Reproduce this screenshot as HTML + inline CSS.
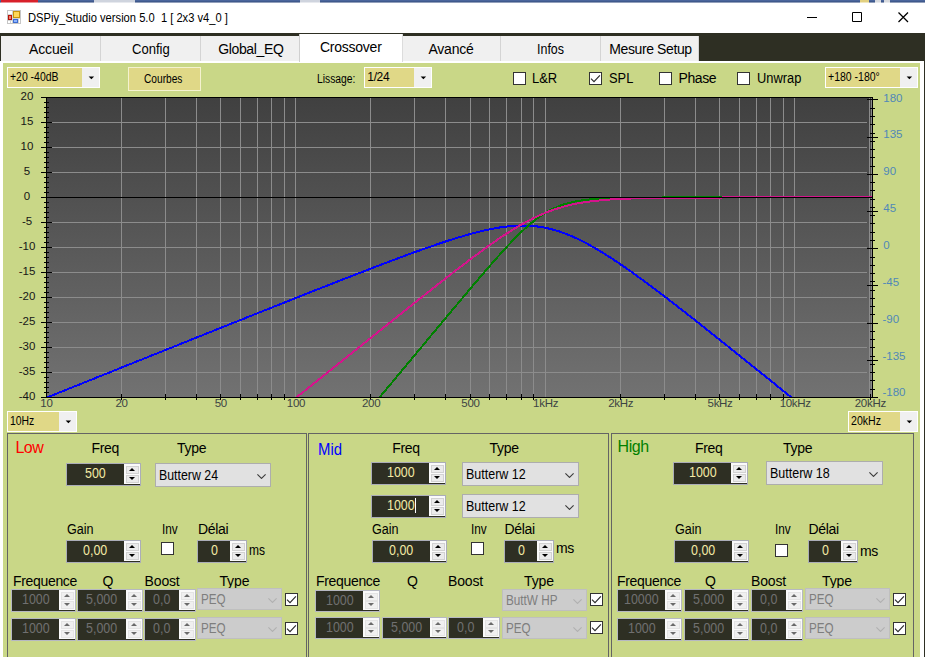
<!DOCTYPE html><html><head><meta charset="utf-8"><title>DSPiy_Studio</title><style>
*{box-sizing:border-box;margin:0;padding:0}
html,body{width:925px;height:657px;overflow:hidden;background:#fff;font-family:"Liberation Sans",sans-serif;font-size:13px;color:#000}
#root{position:relative;width:925px;height:657px;overflow:hidden;background:#fff}
#root>*{position:absolute}
.tx{white-space:pre;line-height:1}
.topstrip{left:0;top:0;width:925px;height:3px;background:linear-gradient(#4a659c 0,#4a659c 1px,#3f598c 1px,#3f598c 2px,#929fbb 2px,#929fbb 3px)}
.tabband{left:0;top:33px;width:925px;height:30px;background:#2e2f23}
.tab{top:36px;height:25px;background:#f0f0f0;border-right:1px solid #d4d4d4}
.tab.sel{top:34px;height:28px;background:#fff;border:none;border-right:1px solid #dcdcdc;border-left:1px solid #d0d0d0}
.page{left:0;top:61px;width:924px;height:600px;background:#c9d787;border:3px solid #fff;border-top-width:2px;border-right-width:4px}
.rightdark{left:924px;top:33px;width:1px;height:630px;background:#2e2f23}
.chart{left:0;top:0}
.cby{background:#e0d887;border:1px solid #fff}
.cby .btn{position:absolute;right:0;top:0;bottom:0;width:17px;background:#f0f0f0}
.cby .btn svg{position:absolute;left:6px;top:8px}
.btnc{background:#e0d887;border:1px solid #f4f2cf}
.chk{width:13px;height:13px;background:#fff;border:1px solid #333}
.chk svg{position:absolute;left:-1px;top:-1px}
.grp{border:1px solid #646464}
.num{background:#2e2f23;border:1px solid #abadb8}
.num .sp{position:absolute;right:0;top:0;bottom:1px;width:16px;background:#fafafa}
.num .sp .u,.num .sp .d{position:absolute;left:2px;width:12.5px;height:8px;border:1px solid #d2d2d2;background:#ebebeb}
.num .sp .u{top:1.5px} .num .sp .d{bottom:1.5px}
.num .sp i{position:absolute;left:50%;top:50%;width:0;height:0;margin-left:-3px;border-left:3px solid transparent;border-right:3px solid transparent}
.num .sp .u i{margin-top:-2px;border-bottom:3.5px solid #000}
.num .sp .d i{margin-top:-1.5px;border-top:3.5px solid #000}
.num.dis{border-color:#b6b8c2}
.num.dis .sp .u,.num.dis .sp .d{border-color:#e4e4e4;background:#f0f0f0;left:1.5px;width:13px}
.num.dis .sp .u i{border-bottom-color:#6a6a6a}
.num.dis .sp .d i{border-top-color:#6a6a6a}
.cb{background:#e1e1e1;border:1px solid #adadad}
.cb .chev{position:absolute;right:4px;top:50%;margin-top:-1.5px;stroke:#3a3a3a}
.cb.dis{background:#cccccc;border-color:#bfbfbf}
.cb.dis .chev{stroke:#b0b0b0}
</style></head><body><div id="root">
<div class="topstrip"></div>
<div style="left:1px;top:0;width:37px;height:3px;background:linear-gradient(#d8202a 0,#d8202a 2px,#eb9095 2px,#eb9095 3px)"></div>
<div style="left:94px;top:0;width:41px;height:3px;background:linear-gradient(#cfd4de 0,#cfd4de 2px,#e7e9ee 2px,#e7e9ee 3px)"></div>
<div style="left:300px;top:0;width:20px;height:3px;background:linear-gradient(#cfd4de 0,#cfd4de 2px,#e7e9ee 2px,#e7e9ee 3px)"></div>
<div style="left:860px;top:0;width:9px;height:3px;background:linear-gradient(#e2d080 0,#e2d080 2px,#f0e7bf 2px,#f0e7bf 3px)"></div>
<div style="left:875px;top:0;width:6px;height:3px;background:linear-gradient(#d8dade 0,#d8dade 2px,#ebecee 2px,#ebecee 3px)"></div>
<div style="left:884px;top:0;width:6px;height:3px;background:linear-gradient(#d8dade 0,#d8dade 2px,#ebecee 2px,#ebecee 3px)"></div>
<svg style="left:7px;top:10px" width="14" height="14" viewBox="0 0 14 14"><rect x="0.5" y="0.5" width="13" height="13" fill="#fff" stroke="#c6c6c6"/><path d="M5.5 1V13M1 4.5H5.5M5.5 8.5H13M1 10.5H5.5M3.5 10.5V13M11.5 8.5V13" stroke="#d2d2d2" fill="none"/><rect x="6" y="1" width="7" height="7" fill="#c8940c"/><rect x="7" y="2" width="5" height="5" fill="#ffd858"/><rect x="1" y="5" width="4" height="5" fill="#b81408"/><rect x="2" y="6" width="2" height="3" fill="#f08070"/><rect x="6" y="9" width="5" height="4" fill="#3c6cd0"/><rect x="7" y="10" width="3" height="2" fill="#8cb4ff"/></svg>
<div class="tx" style="font-size:12px;transform:scaleX(0.9309);transform-origin:0 0;left:27.80px;top:12.00px;">DSPiy_Studio version 5.0  1 [ 2x3 v4_0 ]</div>
<svg style="left:800px;top:3px" width="125" height="30" viewBox="0 0 125 30"><path d="M7 14.5H17 M52.5 9.5H61.5V18.5H52.5Z " stroke="#000" stroke-width="1" fill="none"/><path d="M98.5 9.5L108 19 M108 9.5L98.5 19" stroke="#000" stroke-width="1.25" fill="none"/></svg>
<div class="tabband"></div>
<div class="tab" style="left:1px;width:100px"></div>
<div class="tx" style="font-size:14px;letter-spacing:-0.133px;left:29.00px;top:42.00px;">Accueil</div>
<div class="tab" style="left:101px;width:100px"></div>
<div class="tx" style="font-size:14px;transform:scaleX(0.9317);transform-origin:0 0;left:132.30px;top:42.00px;">Config</div>
<div class="tab" style="left:201px;width:99px"></div>
<div class="tx" style="font-size:14px;letter-spacing:-0.353px;left:218.20px;top:42.00px;">Global_EQ</div>
<div class="tab" style="left:403px;width:98px"></div>
<div class="tx" style="font-size:14px;letter-spacing:-0.190px;left:428.40px;top:42.00px;">Avancé</div>
<div class="tab" style="left:501px;width:100px"></div>
<div class="tx" style="font-size:14px;transform:scaleX(0.8896);transform-origin:0 0;left:537.40px;top:42.00px;">Infos</div>
<div class="tab" style="left:601px;width:98px"></div>
<div class="tx" style="font-size:14px;letter-spacing:-0.397px;left:609.30px;top:42.00px;">Mesure Setup</div>
<div class="page"></div>
<div class="tab sel" style="left:299px;width:104px"></div>
<div class="tx" style="font-size:14px;letter-spacing:-0.233px;left:319.90px;top:40.00px;">Crossover</div>
<div class="rightdark"></div>
<svg class="chart" width="925" height="657" viewBox="0 0 925 657">
<defs><linearGradient id="pg" x1="0" y1="0" x2="0" y2="1"><stop offset="0" stop-color="#404040"/><stop offset="1" stop-color="#727272"/></linearGradient><clipPath id="pc"><rect x="47" y="98" width="825" height="299"/></clipPath></defs>
<rect x="46" y="97" width="827" height="301" fill="url(#pg)"/>
<path d="M121.5 98V397 M165.5 98V397 M196.5 98V397 M220.5 98V397 M240.5 98V397 M257.5 98V397 M271.5 98V397 M284.5 98V397 M295.5 98V397 M370.5 98V397 M414.5 98V397 M445.5 98V397 M470.5 98V397 M489.5 98V397 M506.5 98V397 M521.5 98V397 M533.5 98V397 M545.5 98V397 M620.5 98V397 M664.5 98V397 M695.5 98V397 M719.5 98V397 M739.5 98V397 M756.5 98V397 M770.5 98V397 M783.5 98V397 M794.5 98V397 M869.5 98V397 M871.5 98V397 M52 122.5H867 M52 147.5H867 M52 172.5H867 M52 222.5H867 M52 247.5H867 M52 272.5H867 M52 297.5H867 M52 322.5H867 M52 347.5H867 M52 372.5H867" stroke="#8c8c8c" stroke-width="1" fill="none" shape-rendering="crispEdges"/>
<path d="M46.6 397.6 L48.7 396.8 L50.7 395.9 L52.8 395.1 L54.9 394.3 L56.9 393.5 L59.0 392.6 L61.1 391.8 L63.1 391.0 L65.2 390.2 L67.3 389.3 L69.3 388.5 L71.4 387.7 L73.4 386.8 L75.5 386.0 L77.6 385.2 L79.6 384.4 L81.7 383.5 L83.8 382.7 L85.8 381.9 L87.9 381.1 L90.0 380.2 L92.0 379.4 L94.1 378.6 L96.2 377.7 L98.2 376.9 L100.3 376.1 L102.4 375.3 L104.4 374.4 L106.5 373.6 L108.6 372.8 L110.6 372.0 L112.7 371.1 L114.8 370.3 L116.8 369.5 L118.9 368.6 L120.9 367.8 L123.0 367.0 L125.1 366.2 L127.1 365.3 L129.2 364.5 L131.3 363.7 L133.3 362.9 L135.4 362.0 L137.5 361.2 L139.5 360.4 L141.6 359.6 L143.7 358.7 L145.7 357.9 L147.8 357.1 L149.9 356.2 L151.9 355.4 L154.0 354.6 L156.1 353.8 L158.1 352.9 L160.2 352.1 L162.3 351.3 L164.3 350.5 L166.4 349.6 L168.4 348.8 L170.5 348.0 L172.6 347.2 L174.6 346.3 L176.7 345.5 L178.8 344.7 L180.8 343.8 L182.9 343.0 L185.0 342.2 L187.0 341.4 L189.1 340.5 L191.2 339.7 L193.2 338.9 L195.3 338.1 L197.4 337.2 L199.4 336.4 L201.5 335.6 L203.6 334.8 L205.6 333.9 L207.7 333.1 L209.8 332.3 L211.8 331.5 L213.9 330.6 L215.9 329.8 L218.0 329.0 L220.1 328.2 L222.1 327.3 L224.2 326.5 L226.3 325.7 L228.3 324.9 L230.4 324.0 L232.5 323.2 L234.5 322.4 L236.6 321.6 L238.7 320.7 L240.7 319.9 L242.8 319.1 L244.9 318.3 L246.9 317.4 L249.0 316.6 L251.1 315.8 L253.1 315.0 L255.2 314.1 L257.3 313.3 L259.3 312.5 L261.4 311.7 L263.4 310.8 L265.5 310.0 L267.6 309.2 L269.6 308.4 L271.7 307.6 L273.8 306.7 L275.8 305.9 L277.9 305.1 L280.0 304.3 L282.0 303.4 L284.1 302.6 L286.2 301.8 L288.2 301.0 L290.3 300.2 L292.4 299.3 L294.4 298.5 L296.5 297.7 L298.6 296.9 L300.6 296.1 L302.7 295.2 L304.8 294.4 L306.8 293.6 L308.9 292.8 L310.9 292.0 L313.0 291.2 L315.1 290.3 L317.1 289.5 L319.2 288.7 L321.3 287.9 L323.3 287.1 L325.4 286.3 L327.5 285.5 L329.5 284.7 L331.6 283.8 L333.7 283.0 L335.7 282.2 L337.8 281.4 L339.9 280.6 L341.9 279.8 L344.0 279.0 L346.1 278.2 L348.1 277.4 L350.2 276.6 L352.3 275.8 L354.3 275.0 L356.4 274.2 L358.4 273.4 L360.5 272.6 L362.6 271.8 L364.6 271.0 L366.7 270.2 L368.8 269.4 L370.8 268.6 L372.9 267.8 L375.0 267.0 L377.0 266.2 L379.1 265.4 L381.2 264.6 L383.2 263.9 L385.3 263.1 L387.4 262.3 L389.4 261.5 L391.5 260.7 L393.6 260.0 L395.6 259.2 L397.7 258.4 L399.8 257.6 L401.8 256.9 L403.9 256.1 L405.9 255.4 L408.0 254.6 L410.1 253.8 L412.1 253.1 L414.2 252.3 L416.3 251.6 L418.3 250.9 L420.4 250.1 L422.5 249.4 L424.5 248.7 L426.6 247.9 L428.7 247.2 L430.7 246.5 L432.8 245.8 L434.9 245.1 L436.9 244.4 L439.0 243.7 L441.1 243.0 L443.1 242.3 L445.2 241.6 L447.3 240.9 L449.3 240.3 L451.4 239.6 L453.4 239.0 L455.5 238.3 L457.6 237.7 L459.6 237.1 L461.7 236.5 L463.8 235.9 L465.8 235.3 L467.9 234.7 L470.0 234.1 L472.0 233.5 L474.1 233.0 L476.2 232.5 L478.2 231.9 L480.3 231.4 L482.4 230.9 L484.4 230.5 L486.5 230.0 L488.6 229.6 L490.6 229.1 L492.7 228.7 L494.8 228.4 L496.8 228.0 L498.9 227.6 L500.9 227.3 L503.0 227.0 L505.1 226.8 L507.1 226.5 L509.2 226.3 L511.3 226.1 L513.3 225.9 L515.4 225.8 L517.5 225.7 L519.5 225.6 L521.6 225.6 L523.7 225.6 L525.7 225.6 L527.8 225.7 L529.9 225.8 L531.9 226.0 L534.0 226.1 L536.1 226.3 L538.1 226.6 L540.2 226.9 L542.3 227.2 L544.3 227.6 L546.4 228.0 L548.4 228.5 L550.5 229.0 L552.6 229.5 L554.6 230.1 L556.7 230.7 L558.8 231.3 L560.8 232.0 L562.9 232.7 L565.0 233.5 L567.0 234.3 L569.1 235.1 L571.2 236.0 L573.2 236.9 L575.3 237.8 L577.4 238.7 L579.4 239.7 L581.5 240.8 L583.6 241.8 L585.6 242.9 L587.7 244.0 L589.8 245.1 L591.8 246.3 L593.9 247.4 L595.9 248.6 L598.0 249.9 L600.1 251.1 L602.1 252.4 L604.2 253.6 L606.3 254.9 L608.3 256.3 L610.4 257.6 L612.5 258.9 L614.5 260.3 L616.6 261.7 L618.7 263.1 L620.7 264.5 L622.8 265.9 L624.9 267.3 L626.9 268.8 L629.0 270.2 L631.1 271.7 L633.1 273.1 L635.2 274.6 L637.2 276.1 L639.3 277.6 L641.4 279.1 L643.4 280.6 L645.5 282.2 L647.6 283.7 L649.6 285.2 L651.7 286.8 L653.8 288.3 L655.8 289.9 L657.9 291.4 L660.0 293.0 L662.0 294.6 L664.1 296.1 L666.2 297.7 L668.2 299.3 L670.3 300.9 L672.4 302.5 L674.4 304.1 L676.5 305.7 L678.6 307.3 L680.6 308.9 L682.7 310.5 L684.7 312.1 L686.8 313.8 L688.9 315.4 L690.9 317.0 L693.0 318.6 L695.1 320.2 L697.1 321.9 L699.2 323.5 L701.3 325.1 L703.3 326.8 L705.4 328.4 L707.5 330.1 L709.5 331.7 L711.6 333.4 L713.7 335.0 L715.7 336.6 L717.8 338.3 L719.9 339.9 L721.9 341.6 L724.0 343.2 L726.1 344.9 L728.1 346.5 L730.2 348.2 L732.2 349.9 L734.3 351.5 L736.4 353.2 L738.4 354.8 L740.5 356.5 L742.6 358.1 L744.6 359.8 L746.7 361.5 L748.8 363.1 L750.8 364.8 L752.9 366.4 L755.0 368.1 L757.0 369.8 L759.1 371.4 L761.2 373.1 L763.2 374.7 L765.3 376.4 L767.4 378.1 L769.4 379.7 L771.5 381.4 L773.6 383.0 L775.6 384.7 L777.7 386.4 L779.7 388.0 L781.8 389.7 L783.9 391.4 L785.9 393.0 L788.0 394.7 L790.1 396.3 L792.1 398.0 L794.2 399.7 L796.3 401.3 L798.3 403.0 L800.4 404.6 L802.5 406.3 L804.5 408.0 L806.6 409.6 L808.7 411.3 L810.7 412.9 L812.8 414.6 L814.9 416.3 L816.9 417.9 L819.0 419.6 L821.1 421.2 L823.1 422.9 L825.2 424.6 L827.2 426.2 L829.3 427.9 L831.4 429.5 L833.4 431.2 L835.5 432.9 L837.6 434.5 L839.6 436.2 L841.7 437.8 L843.8 439.5 L845.8 441.2 L847.9 442.8 L850.0 444.5 L852.0 446.1 L854.1 447.8 L856.2 449.4 L858.2 451.1 L860.3 452.8 L862.4 454.4 L864.4 456.1 L866.5 457.7 L868.6 459.4" stroke="#0000ff" stroke-width="2" fill="none" clip-path="url(#pc)" stroke-linejoin="round" shape-rendering="crispEdges"/>
<path d="M329.5 457.5 L331.6 455.1 L333.7 452.6 L335.7 450.1 L337.8 447.6 L339.9 445.1 L341.9 442.6 L344.0 440.2 L346.1 437.7 L348.1 435.2 L350.2 432.7 L352.3 430.2 L354.3 427.7 L356.4 425.3 L358.4 422.8 L360.5 420.3 L362.6 417.8 L364.6 415.3 L366.7 412.9 L368.8 410.4 L370.8 407.9 L372.9 405.4 L375.0 402.9 L377.0 400.4 L379.1 398.0 L381.2 395.5 L383.2 393.0 L385.3 390.5 L387.4 388.0 L389.4 385.6 L391.5 383.1 L393.6 380.6 L395.6 378.1 L397.7 375.6 L399.8 373.1 L401.8 370.7 L403.9 368.2 L405.9 365.7 L408.0 363.2 L410.1 360.7 L412.1 358.3 L414.2 355.8 L416.3 353.3 L418.3 350.8 L420.4 348.3 L422.5 345.9 L424.5 343.4 L426.6 340.9 L428.7 338.4 L430.7 335.9 L432.8 333.5 L434.9 331.0 L436.9 328.5 L439.0 326.0 L441.1 323.6 L443.1 321.1 L445.2 318.6 L447.3 316.1 L449.3 313.7 L451.4 311.2 L453.4 308.7 L455.5 306.3 L457.6 303.8 L459.6 301.3 L461.7 298.9 L463.8 296.4 L465.8 294.0 L467.9 291.5 L470.0 289.1 L472.0 286.6 L474.1 284.2 L476.2 281.8 L478.2 279.3 L480.3 276.9 L482.4 274.5 L484.4 272.1 L486.5 269.7 L488.6 267.3 L490.6 264.9 L492.7 262.6 L494.8 260.2 L496.8 257.9 L498.9 255.6 L500.9 253.3 L503.0 251.0 L505.1 248.7 L507.1 246.5 L509.2 244.3 L511.3 242.1 L513.3 239.9 L515.4 237.8 L517.5 235.8 L519.5 233.7 L521.6 231.7 L523.7 229.8 L525.7 227.9 L527.8 226.1 L529.9 224.3 L531.9 222.6 L534.0 220.9 L536.1 219.3 L538.1 217.8 L540.2 216.3 L542.3 214.9 L544.3 213.6 L546.4 212.3 L548.4 211.1 L550.5 210.0 L552.6 209.0 L554.6 208.0 L556.7 207.1 L558.8 206.2 L560.8 205.4 L562.9 204.7 L565.0 204.1 L567.0 203.4 L569.1 202.9 L571.2 202.4 L573.2 201.9 L575.3 201.5 L577.4 201.1 L579.4 200.7 L581.5 200.4 L583.6 200.1 L585.6 199.9 L587.7 199.6 L589.8 199.4 L591.8 199.2 L593.9 199.1 L595.9 198.9 L598.0 198.8 L600.1 198.7 L602.1 198.5 L604.2 198.4 L606.3 198.4 L608.3 198.3 L610.4 198.2 L612.5 198.1 L614.5 198.1 L616.6 198.0 L618.7 198.0 L620.7 197.9 L622.8 197.9 L624.9 197.9 L626.9 197.8 L629.0 197.8 L631.1 197.8 L633.1 197.8 L635.2 197.8 L637.2 197.7 L639.3 197.7 L641.4 197.7 L643.4 197.7 L645.5 197.7 L647.6 197.7 L649.6 197.7 L651.7 197.7 L653.8 197.7 L655.8 197.6 L657.9 197.6 L660.0 197.6 L662.0 197.6 L664.1 197.0 L666.2 197.0 L668.2 197.0 L670.3 197.0 L672.4 197.0 L674.4 197.0 L676.5 197.0 L678.6 197.0 L680.6 197.0 L682.7 197.0 L684.7 197.0 L686.8 197.0 L688.9 197.0 L690.9 197.0 L693.0 197.0 L695.1 197.0 L697.1 197.0 L699.2 197.0 L701.3 197.0 L703.3 197.0 L705.4 197.0 L707.5 197.0 L709.5 197.0 L711.6 197.0 L713.7 197.0 L715.7 197.0 L717.8 197.0 L719.9 197.0 L721.9 197.0 L724.0 197.0 L726.1 197.0 L728.1 197.0 L730.2 197.0 L732.2 197.0 L734.3 197.0 L736.4 197.0 L738.4 197.0 L740.5 197.0 L742.6 197.0 L744.6 197.0 L746.7 197.0 L748.8 197.0 L750.8 197.0 L752.9 197.0 L755.0 197.0 L757.0 197.0 L759.1 197.0 L761.2 197.0 L763.2 197.0 L765.3 197.0 L767.4 197.0 L769.4 197.0 L771.5 197.0 L773.6 197.0 L775.6 197.0 L777.7 197.0 L779.7 197.0 L781.8 197.0 L783.9 197.0 L785.9 197.0 L788.0 197.0 L790.1 197.0 L792.1 197.0 L794.2 197.0 L796.3 197.0 L798.3 197.0 L800.4 197.0 L802.5 197.0 L804.5 197.0 L806.6 197.0 L808.7 197.0 L810.7 197.0 L812.8 197.0 L814.9 197.0 L816.9 197.0 L819.0 197.0 L821.1 197.0 L823.1 197.0 L825.2 197.0 L827.2 197.0 L829.3 197.0 L831.4 197.0 L833.4 197.0 L835.5 197.0 L837.6 197.0 L839.6 197.0 L841.7 197.0 L843.8 197.0 L845.8 197.0 L847.9 197.0 L850.0 197.0 L852.0 197.0 L854.1 197.0 L856.2 197.0 L858.2 197.0 L860.3 197.0 L862.4 197.0 L864.4 197.0 L866.5 197.0 L868.6 197.0 L870.6 197.0 L872.7 197.0" stroke="#008000" stroke-width="2" fill="none" clip-path="url(#pc)" stroke-linejoin="round" shape-rendering="crispEdges"/>
<path d="M220.1 458.6 L222.1 456.9 L224.2 455.3 L226.3 453.6 L228.3 452.0 L230.4 450.3 L232.5 448.7 L234.5 447.0 L236.6 445.4 L238.7 443.7 L240.7 442.0 L242.8 440.4 L244.9 438.7 L246.9 437.1 L249.0 435.4 L251.1 433.8 L253.1 432.1 L255.2 430.5 L257.3 428.8 L259.3 427.2 L261.4 425.5 L263.4 423.8 L265.5 422.2 L267.6 420.5 L269.6 418.9 L271.7 417.2 L273.8 415.6 L275.8 413.9 L277.9 412.3 L280.0 410.6 L282.0 409.0 L284.1 407.3 L286.2 405.6 L288.2 404.0 L290.3 402.3 L292.4 400.7 L294.4 399.0 L296.5 397.4 L298.6 395.7 L300.6 394.1 L302.7 392.4 L304.8 390.8 L306.8 389.1 L308.9 387.4 L310.9 385.8 L313.0 384.1 L315.1 382.5 L317.1 380.8 L319.2 379.2 L321.3 377.5 L323.3 375.9 L325.4 374.2 L327.5 372.6 L329.5 370.9 L331.6 369.2 L333.7 367.6 L335.7 365.9 L337.8 364.3 L339.9 362.6 L341.9 361.0 L344.0 359.3 L346.1 357.7 L348.1 356.0 L350.2 354.4 L352.3 352.7 L354.3 351.1 L356.4 349.4 L358.4 347.7 L360.5 346.1 L362.6 344.4 L364.6 342.8 L366.7 341.1 L368.8 339.5 L370.8 337.8 L372.9 336.2 L375.0 334.5 L377.0 332.9 L379.1 331.2 L381.2 329.6 L383.2 327.9 L385.3 326.3 L387.4 324.6 L389.4 323.0 L391.5 321.3 L393.6 319.7 L395.6 318.0 L397.7 316.4 L399.8 314.7 L401.8 313.1 L403.9 311.4 L405.9 309.8 L408.0 308.1 L410.1 306.5 L412.1 304.9 L414.2 303.2 L416.3 301.6 L418.3 299.9 L420.4 298.3 L422.5 296.7 L424.5 295.0 L426.6 293.4 L428.7 291.7 L430.7 290.1 L432.8 288.5 L434.9 286.9 L436.9 285.2 L439.0 283.6 L441.1 282.0 L443.1 280.4 L445.2 278.7 L447.3 277.1 L449.3 275.5 L451.4 273.9 L453.4 272.3 L455.5 270.7 L457.6 269.1 L459.6 267.5 L461.7 265.9 L463.8 264.4 L465.8 262.8 L467.9 261.2 L470.0 259.6 L472.0 258.1 L474.1 256.5 L476.2 255.0 L478.2 253.5 L480.3 251.9 L482.4 250.4 L484.4 248.9 L486.5 247.4 L488.6 245.9 L490.6 244.5 L492.7 243.0 L494.8 241.6 L496.8 240.1 L498.9 238.7 L500.9 237.3 L503.0 236.0 L505.1 234.6 L507.1 233.2 L509.2 231.9 L511.3 230.6 L513.3 229.3 L515.4 228.1 L517.5 226.8 L519.5 225.6 L521.6 224.4 L523.7 223.3 L525.7 222.1 L527.8 221.0 L529.9 220.0 L531.9 218.9 L534.0 217.9 L536.1 216.9 L538.1 215.9 L540.2 215.0 L542.3 214.1 L544.3 213.3 L546.4 212.4 L548.4 211.6 L550.5 210.8 L552.6 210.1 L554.6 209.4 L556.7 208.7 L558.8 208.1 L560.8 207.5 L562.9 206.9 L565.0 206.3 L567.0 205.8 L569.1 205.3 L571.2 204.8 L573.2 204.3 L575.3 203.9 L577.4 203.5 L579.4 203.1 L581.5 202.8 L583.6 202.4 L585.6 202.1 L587.7 201.8 L589.8 201.5 L591.8 201.3 L593.9 201.0 L595.9 200.8 L598.0 200.6 L600.1 200.3 L602.1 200.2 L604.2 200.0 L606.3 199.8 L608.3 199.7 L610.4 199.5 L612.5 199.4 L614.5 199.3 L616.6 199.1 L618.7 199.0 L620.7 198.9 L622.8 198.8 L624.9 198.7 L626.9 198.7 L629.0 198.6 L631.1 198.5 L633.1 198.4 L635.2 198.4 L637.2 198.3 L639.3 198.3 L641.4 198.2 L643.4 198.2 L645.5 198.1 L647.6 198.1 L649.6 198.1 L651.7 198.0 L653.8 198.0 L655.8 198.0 L657.9 197.9 L660.0 197.9 L662.0 197.9 L664.1 197.9 L666.2 197.9 L668.2 197.8 L670.3 197.8 L672.4 197.8 L674.4 197.8 L676.5 197.8 L678.6 197.8 L680.6 197.7 L682.7 197.7 L684.7 197.7 L686.8 197.7 L688.9 197.7 L690.9 197.7 L693.0 197.7 L695.1 197.7 L697.1 197.7 L699.2 197.7 L701.3 197.7 L703.3 197.7 L705.4 197.7 L707.5 197.7 L709.5 197.7 L711.6 197.6 L713.7 197.6 L715.7 197.6 L717.8 197.6 L719.9 197.6 L721.9 197.6 L724.0 197.0 L726.1 197.0 L728.1 197.0 L730.2 197.0 L732.2 197.0 L734.3 197.0 L736.4 197.0 L738.4 197.0 L740.5 197.0 L742.6 197.0 L744.6 197.0 L746.7 197.0 L748.8 197.0 L750.8 197.0 L752.9 197.0 L755.0 197.0 L757.0 197.0 L759.1 197.0 L761.2 197.0 L763.2 197.0 L765.3 197.0 L767.4 197.0 L769.4 197.0 L771.5 197.0 L773.6 197.0 L775.6 197.0 L777.7 197.0 L779.7 197.0 L781.8 197.0 L783.9 197.0 L785.9 197.0 L788.0 197.0 L790.1 197.0 L792.1 197.0 L794.2 197.0 L796.3 197.0 L798.3 197.0 L800.4 197.0 L802.5 197.0 L804.5 197.0 L806.6 197.0 L808.7 197.0 L810.7 197.0 L812.8 197.0 L814.9 197.0 L816.9 197.0 L819.0 197.0 L821.1 197.0 L823.1 197.0 L825.2 197.0 L827.2 197.0 L829.3 197.0 L831.4 197.0 L833.4 197.0 L835.5 197.0 L837.6 197.0 L839.6 197.0 L841.7 197.0 L843.8 197.0 L845.8 197.0 L847.9 197.0 L850.0 197.0 L852.0 197.0 L854.1 197.0 L856.2 197.0 L858.2 197.0 L860.3 197.0 L862.4 197.0 L864.4 197.0 L866.5 197.0 L868.6 197.0 L870.6 197.0 L872.7 197.0" stroke="#d4148c" stroke-width="2" fill="none" clip-path="url(#pc)" stroke-linejoin="round" shape-rendering="crispEdges"/>
<path d="M47 197.5H872" stroke="#000" stroke-width="1" shape-rendering="crispEdges"/>
<path d="M41 97.5H873 M46.5 97V398 M41 397.5H878 M872.5 97V398 M41 97.5H52 M44 102.5H49 M44 107.5H49 M44 112.5H49 M44 117.5H49 M41 122.5H52 M44 127.5H49 M44 132.5H49 M44 137.5H49 M44 142.5H49 M41 147.5H52 M44 152.5H49 M44 157.5H49 M44 162.5H49 M44 167.5H49 M41 172.5H52 M44 177.5H49 M44 182.5H49 M44 187.5H49 M44 192.5H49 M41 197.5H52 M44 202.5H49 M44 207.5H49 M44 212.5H49 M44 217.5H49 M41 222.5H52 M44 227.5H49 M44 232.5H49 M44 237.5H49 M44 242.5H49 M41 247.5H52 M44 252.5H49 M44 257.5H49 M44 262.5H49 M44 267.5H49 M41 272.5H52 M44 277.5H49 M44 282.5H49 M44 287.5H49 M44 292.5H49 M41 297.5H52 M44 302.5H49 M44 307.5H49 M44 312.5H49 M44 317.5H49 M41 322.5H52 M44 327.5H49 M44 332.5H49 M44 337.5H49 M44 342.5H49 M41 347.5H52 M44 352.5H49 M44 357.5H49 M44 362.5H49 M44 367.5H49 M41 372.5H52 M44 377.5H49 M44 382.5H49 M44 387.5H49 M44 392.5H49 M41 397.5H52 M867 397.5H878 M870 389.5H875 M870 380.5H875 M870 372.5H875 M870 364.5H875 M867 360.5H878 M870 356.5H875 M870 347.5H875 M870 339.5H875 M870 331.5H875 M867 323.5H878 M870 314.5H875 M870 306.5H875 M870 298.5H875 M870 290.5H875 M867 285.5H878 M870 281.5H875 M870 273.5H875 M870 265.5H875 M870 257.5H875 M867 248.5H878 M870 240.5H875 M870 232.5H875 M870 223.5H875 M870 215.5H875 M867 211.5H878 M870 207.5H875 M870 199.5H875 M870 190.5H875 M870 182.5H875 M867 174.5H878 M870 166.5H875 M870 157.5H875 M870 149.5H875 M870 141.5H875 M867 137.5H878 M870 133.5H875 M870 124.5H875 M870 116.5H875 M870 108.5H875 M867 99.5H878 M121.5 394V400 M165.5 394V400 M196.5 394V400 M220.5 394V400 M240.5 394V400 M257.5 394V400 M271.5 394V400 M284.5 394V400 M370.5 394V400 M414.5 394V400 M445.5 394V400 M470.5 394V400 M489.5 394V400 M506.5 394V400 M521.5 394V400 M533.5 394V400 M620.5 394V400 M664.5 394V400 M695.5 394V400 M719.5 394V400 M739.5 394V400 M756.5 394V400 M770.5 394V400 M783.5 394V400 M870.5 394V400" stroke="#000" stroke-width="1" fill="none" shape-rendering="crispEdges"/>
</svg>
<div class="tx" style="font-size:11.5px;color:#161616;left:20.61px;top:91.00px;">20</div>
<div class="tx" style="font-size:11.5px;color:#161616;left:20.61px;top:116.00px;">15</div>
<div class="tx" style="font-size:11.5px;color:#161616;left:20.61px;top:141.00px;">10</div>
<div class="tx" style="font-size:11.5px;color:#161616;left:23.80px;top:166.00px;">5</div>
<div class="tx" style="font-size:11.5px;color:#161616;left:23.80px;top:191.00px;">0</div>
<div class="tx" style="font-size:11.5px;color:#161616;left:21.89px;top:216.00px;">-5</div>
<div class="tx" style="font-size:11.5px;color:#161616;left:18.69px;top:241.00px;">-10</div>
<div class="tx" style="font-size:11.5px;color:#161616;left:18.69px;top:266.00px;">-15</div>
<div class="tx" style="font-size:11.5px;color:#161616;left:18.69px;top:291.00px;">-20</div>
<div class="tx" style="font-size:11.5px;color:#161616;left:18.69px;top:316.00px;">-25</div>
<div class="tx" style="font-size:11.5px;color:#161616;left:18.69px;top:341.00px;">-30</div>
<div class="tx" style="font-size:11.5px;color:#161616;left:18.69px;top:366.00px;">-35</div>
<div class="tx" style="font-size:11.5px;color:#161616;left:18.69px;top:391.00px;">-40</div>
<div class="tx" style="font-size:11.5px;color:#5088b8;left:883.30px;top:93.00px;">180</div>
<div class="tx" style="font-size:11.5px;color:#5088b8;left:883.30px;top:129.00px;">135</div>
<div class="tx" style="font-size:11.5px;color:#5088b8;left:883.30px;top:166.00px;">90</div>
<div class="tx" style="font-size:11.5px;color:#5088b8;left:883.30px;top:203.00px;">45</div>
<div class="tx" style="font-size:11.5px;color:#5088b8;left:883.30px;top:240.00px;">0</div>
<div class="tx" style="font-size:11.5px;color:#5088b8;left:882.50px;top:277.00px;">-45</div>
<div class="tx" style="font-size:11.5px;color:#5088b8;left:882.50px;top:314.00px;">-90</div>
<div class="tx" style="font-size:11.5px;color:#5088b8;left:882.50px;top:351.00px;">-135</div>
<div class="tx" style="font-size:11.5px;color:#5088b8;left:882.50px;top:387.00px;">-180</div>
<div class="tx" style="font-size:11.5px;color:#3c4444;letter-spacing:-0.288px;left:40.29px;top:398.00px;">10</div>
<div class="tx" style="font-size:11.5px;color:#3c4444;letter-spacing:-0.288px;left:115.43px;top:398.00px;">20</div>
<div class="tx" style="font-size:11.5px;color:#3c4444;letter-spacing:-0.288px;left:214.76px;top:398.00px;">50</div>
<div class="tx" style="font-size:11.5px;color:#3c4444;letter-spacing:-0.288px;left:286.84px;top:398.00px;">100</div>
<div class="tx" style="font-size:11.5px;color:#3c4444;letter-spacing:-0.288px;left:361.98px;top:398.00px;">200</div>
<div class="tx" style="font-size:11.5px;color:#3c4444;letter-spacing:-0.288px;left:461.30px;top:398.00px;">500</div>
<div class="tx" style="font-size:11.5px;color:#3c4444;letter-spacing:-0.295px;left:533.09px;top:398.00px;">1kHz</div>
<div class="tx" style="font-size:11.5px;color:#3c4444;letter-spacing:-0.295px;left:608.23px;top:398.00px;">2kHz</div>
<div class="tx" style="font-size:11.5px;color:#3c4444;letter-spacing:-0.295px;left:707.55px;top:398.00px;">5kHz</div>
<div class="tx" style="font-size:11.5px;color:#3c4444;letter-spacing:-0.293px;left:779.64px;top:398.00px;">10kHz</div>
<div class="tx" style="font-size:11.5px;color:#3c4444;letter-spacing:-0.293px;left:854.77px;top:398.00px;">20kHz</div>
<div class="cby" style="left:7px;top:67px;width:93px;height:21px"><span class="btn"><svg width="7" height="4" viewBox="0 0 7 4"><path d="M0.6 0.4H6.1L3.35 3.3Z" fill="#000"/></svg></span></div>
<div class="tx" style="font-size:12px;transform:scaleX(0.8704);transform-origin:0 0;left:10.30px;top:71.00px;">+20 -40dB</div>
<div class="btnc" style="left:128px;top:67px;width:73px;height:24px"></div>
<div class="tx" style="font-size:12px;transform:scaleX(0.8464);transform-origin:0 0;left:143.70px;top:73.00px;">Courbes</div>
<div class="tx" style="font-size:12px;transform:scaleX(0.8589);transform-origin:0 0;left:317.30px;top:73.00px;">Lissage:</div>
<div class="cby" style="left:364px;top:67px;width:68px;height:21px"><span class="btn"><svg width="7" height="4" viewBox="0 0 7 4"><path d="M0.6 0.4H6.1L3.35 3.3Z" fill="#000"/></svg></span></div>
<div class="tx" style="font-size:12px;letter-spacing:-0.341px;left:367.30px;top:71.00px;">1/24</div>
<div class="chk" style="left:513px;top:72px"></div>
<div class="tx" style="font-size:14px;transform:scaleX(0.9253);transform-origin:0 0;left:532.40px;top:71.00px;">L&amp;R</div>
<div class="chk" style="left:589px;top:72px"><svg width="13" height="13" viewBox="0 0 13 13"><path d="M2 6.6L5 9.6L10.9 3.4" stroke="#2a2a2a" stroke-width="1.15" fill="none"/></svg></div>
<div class="tx" style="font-size:14px;transform:scaleX(0.9182);transform-origin:0 0;left:608.50px;top:71.00px;">SPL</div>
<div class="chk" style="left:659px;top:72px"></div>
<div class="tx" style="font-size:14px;letter-spacing:-0.419px;left:678.50px;top:71.00px;">Phase</div>
<div class="chk" style="left:737px;top:72px"></div>
<div class="tx" style="font-size:14px;transform:scaleX(0.9184);transform-origin:0 0;left:756.70px;top:71.00px;">Unwrap</div>
<div class="cby" style="left:825px;top:67px;width:93px;height:21px"><span class="btn"><svg width="7" height="4" viewBox="0 0 7 4"><path d="M0.6 0.4H6.1L3.35 3.3Z" fill="#000"/></svg></span></div>
<div class="tx" style="font-size:12px;transform:scaleX(0.8751);transform-origin:0 0;left:828.30px;top:71.00px;">+180 -180°</div>
<div class="cby" style="left:7px;top:411px;width:70px;height:21px"><span class="btn"><svg width="7" height="4" viewBox="0 0 7 4"><path d="M0.6 0.4H6.1L3.35 3.3Z" fill="#000"/></svg></span></div>
<div class="tx" style="font-size:12px;transform:scaleX(0.8673);transform-origin:0 0;left:10.30px;top:415.00px;">10Hz</div>
<div class="cby" style="left:848px;top:411px;width:70px;height:21px"><span class="btn"><svg width="7" height="4" viewBox="0 0 7 4"><path d="M0.6 0.4H6.1L3.35 3.3Z" fill="#000"/></svg></span></div>
<div class="tx" style="font-size:12px;transform:scaleX(0.8818);transform-origin:0 0;left:851.30px;top:415.00px;">20kHz</div>
<div class="grp" style="left:7px;top:433px;width:300px;height:240px"></div>
<div class="tx" style="font-size:16px;color:#ff0000;letter-spacing:-0.451px;left:15.40px;top:440.00px;">Low</div>
<div class="tx" style="font-size:14px;letter-spacing:-0.371px;left:91.60px;top:441.00px;">Freq</div>
<div class="tx" style="font-size:14px;letter-spacing:-0.262px;left:176.90px;top:441.00px;">Type</div>
<div class="num" style="left:66px;top:463px;width:75px;height:23px"><span class="sp"><span class="u"><i></i></span><span class="d"><i></i></span></span></div>
<div class="tx" style="font-size:14px;color:#f3eaa5;transform:scaleX(0.8901);transform-origin:0 0;left:85.11px;top:466.00px;">500</div>
<div class="cb" style="left:155px;top:463px;width:116px;height:24px"><svg class="chev" width="9" height="5" viewBox="0 0 9 5"><path d="M0.4 0.4L4.5 4.4L8.6 0.4" fill="none" stroke-width="1.1"/></svg></div>
<div class="tx" style="font-size:14px;color:#000;transform:scaleX(0.8816);transform-origin:0 0;left:159.30px;top:468.00px;">Butterw 24</div>
<div class="tx" style="font-size:14px;transform:scaleX(0.8996);transform-origin:0 0;left:66.70px;top:522.00px;">Gain</div>
<div class="tx" style="font-size:14px;transform:scaleX(0.8407);transform-origin:0 0;left:161.50px;top:522.00px;">Inv</div>
<div class="tx" style="font-size:14px;letter-spacing:-0.300px;left:198.00px;top:522.00px;">Délai</div>
<div class="num" style="left:66px;top:540px;width:75px;height:23px"><span class="sp"><span class="u"><i></i></span><span class="d"><i></i></span></span></div>
<div class="tx" style="font-size:14px;color:#f3eaa5;transform:scaleX(0.8901);transform-origin:0 0;left:83.37px;top:543.00px;">0,00</div>
<div class="chk" style="left:161px;top:542px"></div>
<div class="num" style="left:197px;top:540px;width:50px;height:23px"><span class="sp"><span class="u"><i></i></span><span class="d"><i></i></span></span></div>
<div class="tx" style="font-size:14px;color:#f3eaa5;transform:scaleX(0.8901);transform-origin:0 0;left:210.54px;top:543.00px;">0</div>
<div class="tx" style="font-size:14px;transform:scaleX(0.8573);transform-origin:0 0;left:249.00px;top:543.00px;">ms</div>
<div class="tx" style="font-size:14px;letter-spacing:-0.325px;left:13.00px;top:574.00px;">Frequence</div>
<div class="tx" style="font-size:14px;letter-spacing:-0.262px;left:102.40px;top:574.00px;">Q</div>
<div class="tx" style="font-size:14px;letter-spacing:-0.160px;left:144.60px;top:574.00px;">Boost</div>
<div class="tx" style="font-size:14px;letter-spacing:-0.087px;left:219.40px;top:574.00px;">Type</div>
<div class="num dis" style="left:11px;top:589px;width:65px;height:23px"><span class="sp"><span class="u"><i></i></span><span class="d"><i></i></span></span></div>
<div class="tx" style="font-size:14px;color:#707070;transform:scaleX(0.8901);transform-origin:0 0;left:21.64px;top:592.00px;">1000</div>
<div class="num dis" style="left:77px;top:589px;width:66px;height:23px"><span class="sp"><span class="u"><i></i></span><span class="d"><i></i></span></span></div>
<div class="tx" style="font-size:14px;color:#707070;transform:scaleX(0.8901);transform-origin:0 0;left:86.41px;top:592.00px;">5,000</div>
<div class="num dis" style="left:144px;top:589px;width:52px;height:23px"><span class="sp"><span class="u"><i></i></span><span class="d"><i></i></span></span></div>
<div class="tx" style="font-size:14px;color:#707070;transform:scaleX(0.8900);transform-origin:0 0;left:153.34px;top:592.00px;">0,0</div>
<div class="cb dis" style="left:197px;top:588px;width:85px;height:22px"><svg class="chev" width="9" height="5" viewBox="0 0 9 5"><path d="M0.4 0.4L4.5 4.4L8.6 0.4" fill="none" stroke-width="1.1"/></svg></div>
<div class="tx" style="font-size:14px;color:#7e7e7e;transform:scaleX(0.8319);transform-origin:0 0;left:201.30px;top:592.00px;">PEQ</div>
<div class="chk" style="left:285px;top:593px"><svg width="13" height="13" viewBox="0 0 13 13"><path d="M2 6.6L5 9.6L10.9 3.4" stroke="#2a2a2a" stroke-width="1.15" fill="none"/></svg></div>
<div class="num dis" style="left:11px;top:618px;width:65px;height:23px"><span class="sp"><span class="u"><i></i></span><span class="d"><i></i></span></span></div>
<div class="tx" style="font-size:14px;color:#707070;transform:scaleX(0.8901);transform-origin:0 0;left:21.64px;top:621.00px;">1000</div>
<div class="num dis" style="left:77px;top:618px;width:66px;height:23px"><span class="sp"><span class="u"><i></i></span><span class="d"><i></i></span></span></div>
<div class="tx" style="font-size:14px;color:#707070;transform:scaleX(0.8901);transform-origin:0 0;left:86.41px;top:621.00px;">5,000</div>
<div class="num dis" style="left:144px;top:618px;width:52px;height:23px"><span class="sp"><span class="u"><i></i></span><span class="d"><i></i></span></span></div>
<div class="tx" style="font-size:14px;color:#707070;transform:scaleX(0.8900);transform-origin:0 0;left:153.34px;top:621.00px;">0,0</div>
<div class="cb dis" style="left:197px;top:617px;width:85px;height:22px"><svg class="chev" width="9" height="5" viewBox="0 0 9 5"><path d="M0.4 0.4L4.5 4.4L8.6 0.4" fill="none" stroke-width="1.1"/></svg></div>
<div class="tx" style="font-size:14px;color:#7e7e7e;transform:scaleX(0.8319);transform-origin:0 0;left:201.30px;top:621.00px;">PEQ</div>
<div class="chk" style="left:285px;top:622px"><svg width="13" height="13" viewBox="0 0 13 13"><path d="M2 6.6L5 9.6L10.9 3.4" stroke="#2a2a2a" stroke-width="1.15" fill="none"/></svg></div>
<div class="grp" style="left:308px;top:433px;width:301px;height:240px"></div>
<div class="tx" style="font-size:16px;color:#0000ff;transform:scaleX(0.9309);transform-origin:0 0;left:317.70px;top:442.00px;">Mid</div>
<div class="tx" style="font-size:14px;letter-spacing:-0.371px;left:392.30px;top:441.00px;">Freq</div>
<div class="tx" style="font-size:14px;letter-spacing:-0.262px;left:489.60px;top:441.00px;">Type</div>
<div class="num" style="left:371px;top:462px;width:75px;height:23px"><span class="sp"><span class="u"><i></i></span><span class="d"><i></i></span></span></div>
<div class="tx" style="font-size:14px;color:#f3eaa5;transform:scaleX(0.8901);transform-origin:0 0;left:386.64px;top:465.00px;">1000</div>
<div class="cb" style="left:462px;top:462px;width:117px;height:24px"><svg class="chev" width="9" height="5" viewBox="0 0 9 5"><path d="M0.4 0.4L4.5 4.4L8.6 0.4" fill="none" stroke-width="1.1"/></svg></div>
<div class="tx" style="font-size:14px;color:#000;transform:scaleX(0.8920);transform-origin:0 0;left:466.30px;top:467.00px;">Butterw 12</div>
<div class="num" style="left:371px;top:495px;width:75px;height:23px"><span class="sp"><span class="u"><i></i></span><span class="d"><i></i></span></span></div>
<div class="tx" style="font-size:14px;color:#f3eaa5;transform:scaleX(0.8901);transform-origin:0 0;left:386.64px;top:498.00px;">1000</div>
<div style="left:415px;top:498px;width:1px;height:15px;background:#fff"></div>
<div class="cb" style="left:462px;top:494px;width:117px;height:24px"><svg class="chev" width="9" height="5" viewBox="0 0 9 5"><path d="M0.4 0.4L4.5 4.4L8.6 0.4" fill="none" stroke-width="1.1"/></svg></div>
<div class="tx" style="font-size:14px;color:#000;transform:scaleX(0.8920);transform-origin:0 0;left:466.30px;top:499.00px;">Butterw 12</div>
<div class="tx" style="font-size:14px;transform:scaleX(0.8996);transform-origin:0 0;left:372.30px;top:522.00px;">Gain</div>
<div class="tx" style="font-size:14px;transform:scaleX(0.8407);transform-origin:0 0;left:471.30px;top:522.00px;">Inv</div>
<div class="tx" style="font-size:14px;letter-spacing:-0.300px;left:504.50px;top:522.00px;">Délai</div>
<div class="num" style="left:372px;top:540px;width:75px;height:23px"><span class="sp"><span class="u"><i></i></span><span class="d"><i></i></span></span></div>
<div class="tx" style="font-size:14px;color:#f3eaa5;transform:scaleX(0.8901);transform-origin:0 0;left:389.37px;top:543.00px;">0,00</div>
<div class="chk" style="left:471px;top:542px"></div>
<div class="num" style="left:504px;top:540px;width:50px;height:23px"><span class="sp"><span class="u"><i></i></span><span class="d"><i></i></span></span></div>
<div class="tx" style="font-size:14px;color:#f3eaa5;transform:scaleX(0.8901);transform-origin:0 0;left:517.54px;top:543.00px;">0</div>
<div class="tx" style="font-size:14px;letter-spacing:-0.447px;left:556.00px;top:541.00px;">ms</div>
<div class="tx" style="font-size:14px;letter-spacing:-0.325px;left:316.00px;top:574.00px;">Frequence</div>
<div class="tx" style="font-size:14px;letter-spacing:-0.262px;left:407.00px;top:574.00px;">Q</div>
<div class="tx" style="font-size:14px;letter-spacing:-0.160px;left:448.00px;top:574.00px;">Boost</div>
<div class="tx" style="font-size:14px;letter-spacing:-0.087px;left:524.00px;top:574.00px;">Type</div>
<div class="num dis" style="left:315px;top:590px;width:65px;height:22px"><span class="sp"><span class="u"><i></i></span><span class="d"><i></i></span></span></div>
<div class="tx" style="font-size:14px;color:#707070;transform:scaleX(0.8901);transform-origin:0 0;left:325.64px;top:593.00px;">1000</div>
<div class="cb dis" style="left:502px;top:589px;width:85px;height:22px"><svg class="chev" width="9" height="5" viewBox="0 0 9 5"><path d="M0.4 0.4L4.5 4.4L8.6 0.4" fill="none" stroke-width="1.1"/></svg></div>
<div class="tx" style="font-size:14px;color:#7e7e7e;transform:scaleX(0.8379);transform-origin:0 0;left:506.30px;top:593.00px;">ButtW HP</div>
<div class="chk" style="left:590px;top:593px"><svg width="13" height="13" viewBox="0 0 13 13"><path d="M2 6.6L5 9.6L10.9 3.4" stroke="#2a2a2a" stroke-width="1.15" fill="none"/></svg></div>
<div class="num dis" style="left:315px;top:617px;width:65px;height:22px"><span class="sp"><span class="u"><i></i></span><span class="d"><i></i></span></span></div>
<div class="tx" style="font-size:14px;color:#707070;transform:scaleX(0.8901);transform-origin:0 0;left:325.64px;top:620.00px;">1000</div>
<div class="num dis" style="left:382px;top:617px;width:65px;height:22px"><span class="sp"><span class="u"><i></i></span><span class="d"><i></i></span></span></div>
<div class="tx" style="font-size:14px;color:#707070;transform:scaleX(0.8901);transform-origin:0 0;left:390.91px;top:620.00px;">5,000</div>
<div class="num dis" style="left:448px;top:617px;width:52px;height:22px"><span class="sp"><span class="u"><i></i></span><span class="d"><i></i></span></span></div>
<div class="tx" style="font-size:14px;color:#707070;transform:scaleX(0.8900);transform-origin:0 0;left:457.34px;top:620.00px;">0,0</div>
<div class="cb dis" style="left:502px;top:617px;width:85px;height:22px"><svg class="chev" width="9" height="5" viewBox="0 0 9 5"><path d="M0.4 0.4L4.5 4.4L8.6 0.4" fill="none" stroke-width="1.1"/></svg></div>
<div class="tx" style="font-size:14px;color:#7e7e7e;transform:scaleX(0.8319);transform-origin:0 0;left:506.30px;top:621.00px;">PEQ</div>
<div class="chk" style="left:590px;top:621px"><svg width="13" height="13" viewBox="0 0 13 13"><path d="M2 6.6L5 9.6L10.9 3.4" stroke="#2a2a2a" stroke-width="1.15" fill="none"/></svg></div>
<div class="grp" style="left:611px;top:433px;width:303px;height:240px"></div>
<div class="tx" style="font-size:16px;color:#008000;letter-spacing:-0.477px;left:617.60px;top:439.00px;">High</div>
<div class="tx" style="font-size:14px;letter-spacing:-0.371px;left:695.00px;top:441.00px;">Freq</div>
<div class="tx" style="font-size:14px;letter-spacing:-0.262px;left:783.00px;top:441.00px;">Type</div>
<div class="num" style="left:673px;top:462px;width:75px;height:23px"><span class="sp"><span class="u"><i></i></span><span class="d"><i></i></span></span></div>
<div class="tx" style="font-size:14px;color:#f3eaa5;transform:scaleX(0.8901);transform-origin:0 0;left:688.64px;top:465.00px;">1000</div>
<div class="cb" style="left:766px;top:461px;width:117px;height:24px"><svg class="chev" width="9" height="5" viewBox="0 0 9 5"><path d="M0.4 0.4L4.5 4.4L8.6 0.4" fill="none" stroke-width="1.1"/></svg></div>
<div class="tx" style="font-size:14px;color:#000;transform:scaleX(0.8920);transform-origin:0 0;left:770.30px;top:466.00px;">Butterw 18</div>
<div class="tx" style="font-size:14px;transform:scaleX(0.8996);transform-origin:0 0;left:675.30px;top:522.00px;">Gain</div>
<div class="tx" style="font-size:14px;transform:scaleX(0.8407);transform-origin:0 0;left:775.30px;top:522.00px;">Inv</div>
<div class="tx" style="font-size:14px;letter-spacing:-0.300px;left:808.50px;top:522.00px;">Délai</div>
<div class="num" style="left:674px;top:540px;width:75px;height:23px"><span class="sp"><span class="u"><i></i></span><span class="d"><i></i></span></span></div>
<div class="tx" style="font-size:14px;color:#f3eaa5;transform:scaleX(0.8901);transform-origin:0 0;left:691.37px;top:543.00px;">0,00</div>
<div class="chk" style="left:775px;top:544px"></div>
<div class="num" style="left:808px;top:540px;width:50px;height:23px"><span class="sp"><span class="u"><i></i></span><span class="d"><i></i></span></span></div>
<div class="tx" style="font-size:14px;color:#f3eaa5;transform:scaleX(0.8901);transform-origin:0 0;left:821.54px;top:543.00px;">0</div>
<div class="tx" style="font-size:14px;letter-spacing:-0.447px;left:860.00px;top:544.00px;">ms</div>
<div class="tx" style="font-size:14px;letter-spacing:-0.325px;left:617.00px;top:574.00px;">Frequence</div>
<div class="tx" style="font-size:14px;letter-spacing:-0.262px;left:705.00px;top:574.00px;">Q</div>
<div class="tx" style="font-size:14px;letter-spacing:-0.160px;left:751.00px;top:574.00px;">Boost</div>
<div class="tx" style="font-size:14px;letter-spacing:-0.087px;left:822.00px;top:574.00px;">Type</div>
<div class="num dis" style="left:617px;top:589px;width:65px;height:23px"><span class="sp"><span class="u"><i></i></span><span class="d"><i></i></span></span></div>
<div class="tx" style="font-size:14px;color:#707070;transform:scaleX(0.8901);transform-origin:0 0;left:624.18px;top:592.00px;">10000</div>
<div class="num dis" style="left:684px;top:589px;width:65px;height:23px"><span class="sp"><span class="u"><i></i></span><span class="d"><i></i></span></span></div>
<div class="tx" style="font-size:14px;color:#707070;transform:scaleX(0.8901);transform-origin:0 0;left:692.91px;top:592.00px;">5,000</div>
<div class="num dis" style="left:751px;top:589px;width:52px;height:23px"><span class="sp"><span class="u"><i></i></span><span class="d"><i></i></span></span></div>
<div class="tx" style="font-size:14px;color:#707070;transform:scaleX(0.8900);transform-origin:0 0;left:760.34px;top:592.00px;">0,0</div>
<div class="cb dis" style="left:805px;top:588px;width:85px;height:22px"><svg class="chev" width="9" height="5" viewBox="0 0 9 5"><path d="M0.4 0.4L4.5 4.4L8.6 0.4" fill="none" stroke-width="1.1"/></svg></div>
<div class="tx" style="font-size:14px;color:#7e7e7e;transform:scaleX(0.8319);transform-origin:0 0;left:809.30px;top:592.00px;">PEQ</div>
<div class="chk" style="left:893px;top:593px"><svg width="13" height="13" viewBox="0 0 13 13"><path d="M2 6.6L5 9.6L10.9 3.4" stroke="#2a2a2a" stroke-width="1.15" fill="none"/></svg></div>
<div class="num dis" style="left:617px;top:618px;width:65px;height:23px"><span class="sp"><span class="u"><i></i></span><span class="d"><i></i></span></span></div>
<div class="tx" style="font-size:14px;color:#707070;transform:scaleX(0.8901);transform-origin:0 0;left:627.64px;top:621.00px;">1000</div>
<div class="num dis" style="left:684px;top:618px;width:65px;height:23px"><span class="sp"><span class="u"><i></i></span><span class="d"><i></i></span></span></div>
<div class="tx" style="font-size:14px;color:#707070;transform:scaleX(0.8901);transform-origin:0 0;left:692.91px;top:621.00px;">5,000</div>
<div class="num dis" style="left:751px;top:618px;width:52px;height:23px"><span class="sp"><span class="u"><i></i></span><span class="d"><i></i></span></span></div>
<div class="tx" style="font-size:14px;color:#707070;transform:scaleX(0.8900);transform-origin:0 0;left:760.34px;top:621.00px;">0,0</div>
<div class="cb dis" style="left:805px;top:617px;width:85px;height:22px"><svg class="chev" width="9" height="5" viewBox="0 0 9 5"><path d="M0.4 0.4L4.5 4.4L8.6 0.4" fill="none" stroke-width="1.1"/></svg></div>
<div class="tx" style="font-size:14px;color:#7e7e7e;transform:scaleX(0.8319);transform-origin:0 0;left:809.30px;top:621.00px;">PEQ</div>
<div class="chk" style="left:893px;top:622px"><svg width="13" height="13" viewBox="0 0 13 13"><path d="M2 6.6L5 9.6L10.9 3.4" stroke="#2a2a2a" stroke-width="1.15" fill="none"/></svg></div>
</div></body></html>
